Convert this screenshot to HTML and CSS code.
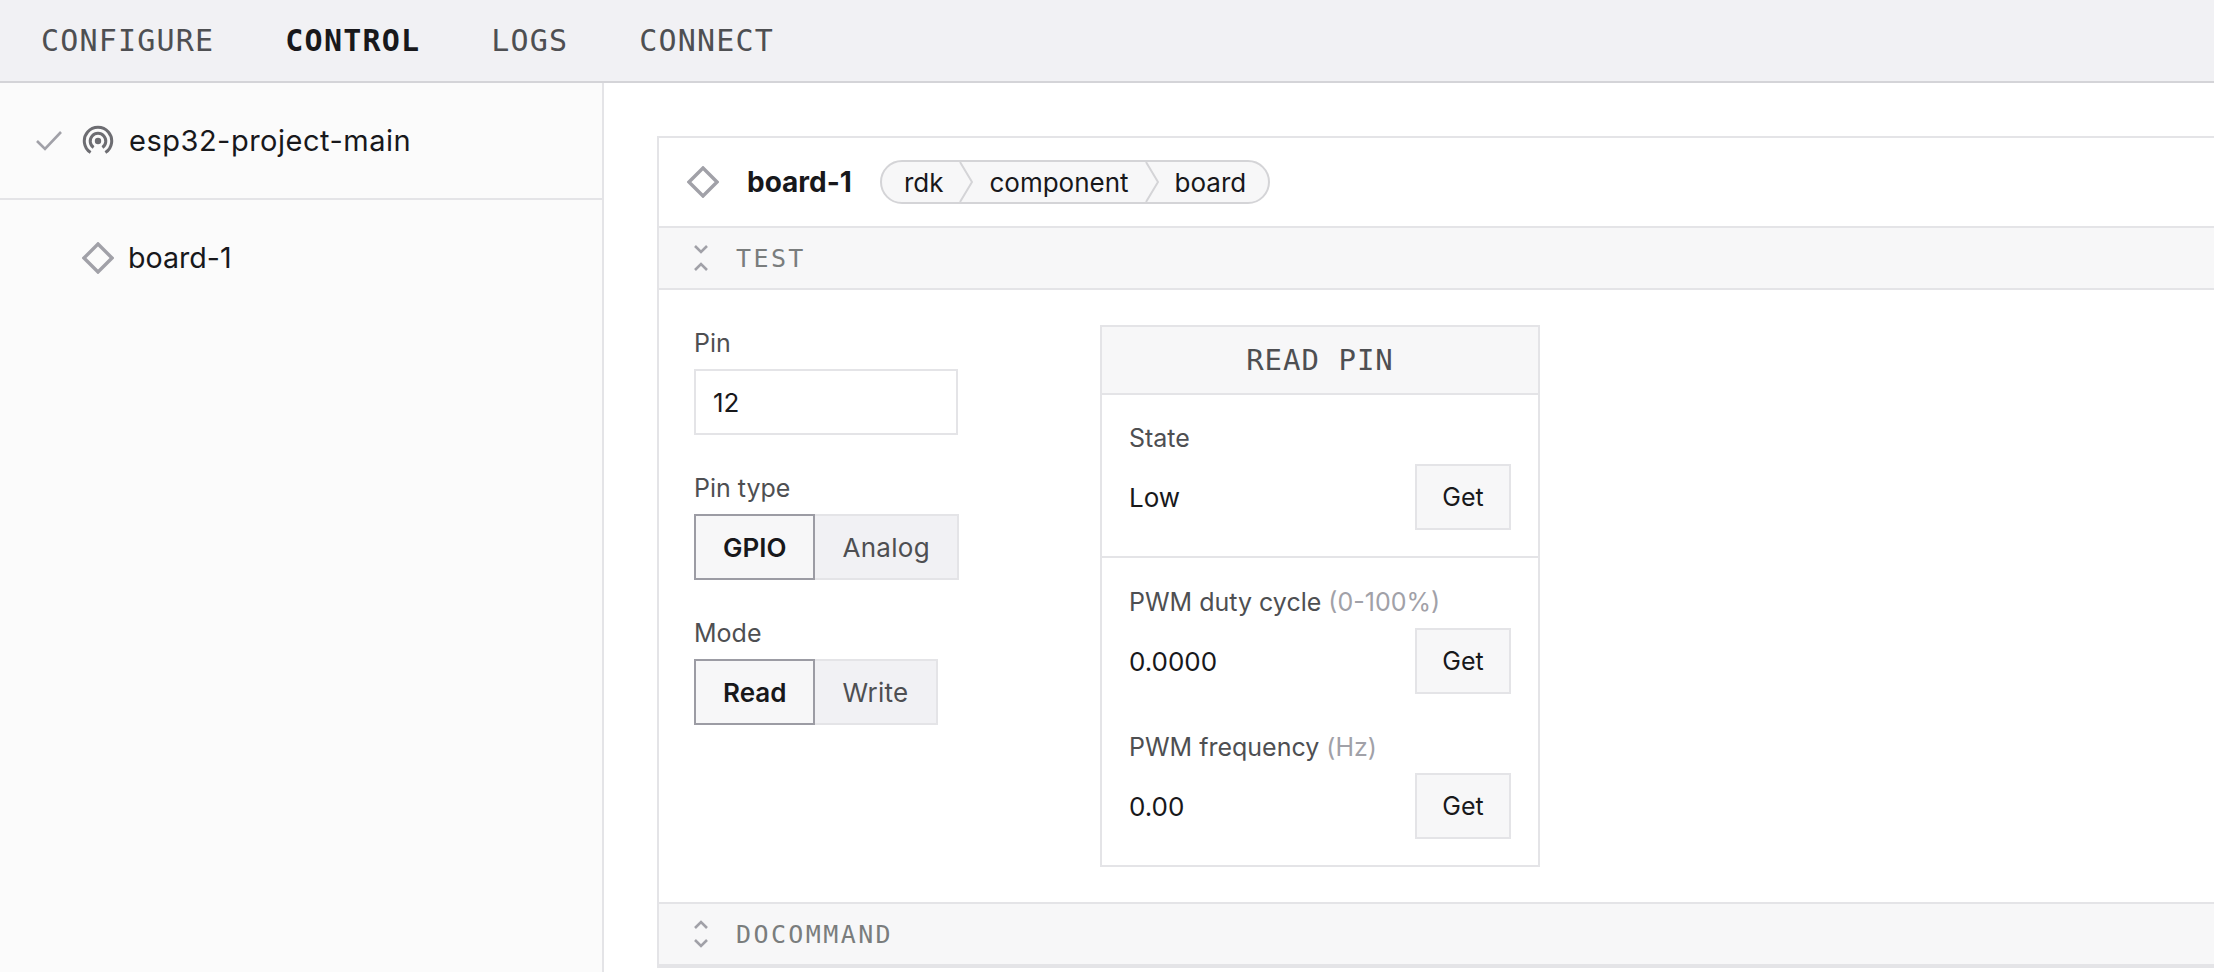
FILE: index.html
```html
<!DOCTYPE html>
<html>
<head>
  <title>Control</title>
  <link rel="stylesheet" href="styles.css">
</head>
<body>
  <nav class="topnav">
    <a class="topnav-item">CONFIGURE</a>
    <a class="topnav-item active">CONTROL</a>
    <a class="topnav-item">LOGS</a>
    <a class="topnav-item">CONNECT</a>
  </nav>
  <div class="layout">
    <aside class="sidebar">
      <div class="machine-row">
        <svg class="check-icon" width="28" height="28" viewBox="0 0 28 28"><path d="M2 14l8 8L26 5" fill="none" stroke="#a1a1a8" stroke-width="2.6"/></svg>
        <svg class="antenna-icon" width="32" height="32" viewBox="0 0 32 32"><g fill="none" stroke="#6d6d72" stroke-width="3"><path d="M8.6 27.5a13.7 13.7 0 1 1 14.8 0"/><path d="M11.6 22.5a7.8 7.8 0 1 1 8.8 0"/></g><circle cx="16" cy="16" r="3.2" fill="#6d6d72"/></svg>
        <span class="machine-name">esp32-project-main</span>
      </div>
      <div class="component-row">
        <svg class="diamond-icon" width="32" height="32" viewBox="0 0 32 32"><path d="M16 2l14 14-14 14L2 16z" fill="none" stroke="#a1a1a8" stroke-width="3.4"/></svg>
        <span class="component-name">board-1</span>
      </div>
    </aside>
    <main class="content">
      <section class="panel">
        <header class="panel-title">
          <svg class="diamond-icon" width="32" height="32" viewBox="0 0 32 32"><path d="M16 2l14 14-14 14L2 16z" fill="none" stroke="#a1a1a8" stroke-width="3.4"/></svg>
          <h2 class="panel-name">board-1</h2>
          <div class="breadcrumb">
            <span class="crumb">rdk</span>
            <svg class="crumb-sep" width="14" height="40" viewBox="0 0 14 40"><path d="M1 0l12 20L1 40" fill="none" stroke="#d4d4d7" stroke-width="2"/></svg>
            <span class="crumb">component</span>
            <svg class="crumb-sep" width="14" height="40" viewBox="0 0 14 40"><path d="M1 0l12 20L1 40" fill="none" stroke="#d4d4d7" stroke-width="2"/></svg>
            <span class="crumb">board</span>
          </div>
        </header>
        <div class="section-bar">
          <svg class="fold-icon" width="16" height="28" viewBox="0 0 16 28"><path d="M2 2l6 6 6-6M2 26l6-6 6 6" fill="none" stroke="#a1a1a8" stroke-width="2.6"/></svg>
          <span class="section-label">TEST</span>
        </div>
        <div class="test-body">
          <div class="controls">
            <div class="field">
              <label class="field-label">Pin</label>
              <div class="text-input">12</div>
            </div>
            <div class="field">
              <label class="field-label">Pin type</label>
              <div class="toggle">
                <span class="toggle-option selected">GPIO</span>
                <span class="toggle-option">Analog</span>
              </div>
            </div>
            <div class="field">
              <label class="field-label">Mode</label>
              <div class="toggle">
                <span class="toggle-option selected">Read</span>
                <span class="toggle-option">Write</span>
              </div>
            </div>
          </div>
          <div class="read-card">
            <div class="card-head">READ PIN</div>
            <div class="card-group divided">
              <div class="read-item">
                <div class="field-label">State</div>
                <div class="read-value">
                  <span>Low</span>
                  <button class="get-btn">Get</button>
                </div>
              </div>
            </div>
            <div class="card-group">
              <div class="read-item">
                <div class="field-label">PWM duty cycle <span class="unit">(0-100%)</span></div>
                <div class="read-value">
                  <span>0.0000</span>
                  <button class="get-btn">Get</button>
                </div>
              </div>
              <div class="read-item">
                <div class="field-label">PWM frequency <span class="unit">(Hz)</span></div>
                <div class="read-value">
                  <span>0.00</span>
                  <button class="get-btn">Get</button>
                </div>
              </div>
            </div>
          </div>
        </div>
        <div class="section-bar">
          <svg class="fold-icon" width="16" height="28" viewBox="0 0 16 28"><path d="M2 8l6-6 6 6M2 20l6 6 6-6" fill="none" stroke="#a1a1a8" stroke-width="2.6"/></svg>
          <span class="section-label">DOCOMMAND</span>
        </div>
      </section>
    </main>
  </div>
</body>
</html>
```

FILE: styles.css
```css
* {
  box-sizing: border-box;
}

html, body {
  height: 100%;
}

body {
  margin: 0;
  overflow: hidden;
  font-family: Inter, "Noto Sans", sans-serif;
  font-size: 26px;
  color: #18181b;
  background: #fff;
}

.topnav {
  display: flex;
  gap: 71px;
  align-items: center;
  height: 83px;
  padding-left: 41px;
  background: #f1f1f4;
  border-bottom: 2px solid #d4d4d8;
}

.topnav-item {
  font-family: "DejaVu Sans Mono", monospace;
  font-size: 30px;
  letter-spacing: 1.2px;
  color: #4e4f52;
}

.topnav-item.active {
  font-weight: bold;
  color: #18181b;
}

.layout {
  display: flex;
  height: 889px;
}

.sidebar {
  flex: 0 0 604px;
  background: #fbfbfb;
  border-right: 2px solid #e4e4e7;
}

.machine-row {
  display: flex;
  align-items: center;
  height: 117px;
  padding-left: 35px;
  border-bottom: 2px solid #e4e4e7;
}

.check-icon {
  margin-right: 19px;
}

.antenna-icon {
  margin-right: 15px;
}

.machine-name {
  font-size: 29px;
  letter-spacing: 0.5px;
}

.component-name {
  font-size: 28.6px;
}

.component-row {
  display: flex;
  align-items: center;
  height: 115px;
  padding-left: 82px;
}

.component-row .diamond-icon {
  margin-right: 14px;
}

.content {
  flex: 1;
  min-width: 0;
  padding: 53px 0 0 53px;
}

.panel {
  margin-right: -20px;
  border: 2px solid #e4e4e7;
  background: #fff;
}

.panel-title {
  display: flex;
  align-items: center;
  height: 88px;
  padding-left: 28px;
}

.panel-name {
  margin: 0 28px 0 28px;
  font-size: 28px;
  font-weight: 700;
}

.breadcrumb {
  display: flex;
  align-items: center;
  height: 44px;
  padding: 0 22px;
  background: #f7f7f8;
  border: 2px solid #d4d4d7;
  border-radius: 22px;
}

.crumb {
  font-size: 26px;
}

.crumb-sep {
  margin: 0 16px 0 16px;
}

.section-bar {
  display: flex;
  align-items: center;
  height: 64px;
  padding-left: 34px;
  background: #f7f7f8;
  border-top: 2px solid #e4e4e7;
  border-bottom: 2px solid #e4e4e7;
}

.section-label {
  margin-left: 27px;
  font-family: "DejaVu Sans Mono", monospace;
  font-size: 25px;
  letter-spacing: 2.4px;
  color: #7a7d7d;
}

.test-body {
  display: flex;
  gap: 141px;
  height: 612px;
  padding: 35px 0 0 35px;
}

.controls {
  display: flex;
  flex-direction: column;
  gap: 35px;
}

.field-label {
  display: block;
  font-size: 25px;
  line-height: 36px;
  color: #4e4f52;
}

.text-input {
  display: flex;
  align-items: center;
  width: 264px;
  height: 66px;
  margin-top: 8px;
  padding-left: 17px;
  border: 2px solid #e4e4e7;
}

.toggle {
  display: flex;
  margin-top: 8px;
}

.toggle-option {
  display: flex;
  align-items: center;
  height: 66px;
  padding: 0 27px;
  letter-spacing: 0.3px;
  color: #4e4f52;
  background: #f1f1f4;
  border: 2px solid #e4e4e7;
  border-left: none;
}

.toggle-option.selected {
  font-weight: 600;
  letter-spacing: 0;
  color: #18181b;
  background: #f7f7f8;
  border: 2px solid #9c9ca4;
}

.read-card {
  width: 440px;
  height: 542px;
  border: 2px solid #e4e4e7;
}

.card-head {
  height: 68px;
  line-height: 66px;
  text-align: center;
  font-family: "DejaVu Sans Mono", monospace;
  font-size: 29px;
  letter-spacing: 1px;
  color: #4e4f52;
  background: #f7f7f8;
  border-bottom: 2px solid #e4e4e7;
}

.card-group {
  padding: 26px 27px 0 27px;
}

.card-group.divided {
  height: 163px;
  padding-top: 25px;
  border-bottom: 2px solid #e4e4e7;
}

.read-item + .read-item {
  margin-top: 35px;
}

.read-value {
  display: flex;
  align-items: center;
  justify-content: space-between;
  margin-top: 8px;
}

.unit {
  color: #a1a1a8;
}

.get-btn {
  width: 96px;
  height: 66px;
  padding: 0;
  font-family: inherit;
  font-size: 25px;
  color: #18181b;
  background: #f7f7f8;
  border: 2px solid #e4e4e7;
}
```
